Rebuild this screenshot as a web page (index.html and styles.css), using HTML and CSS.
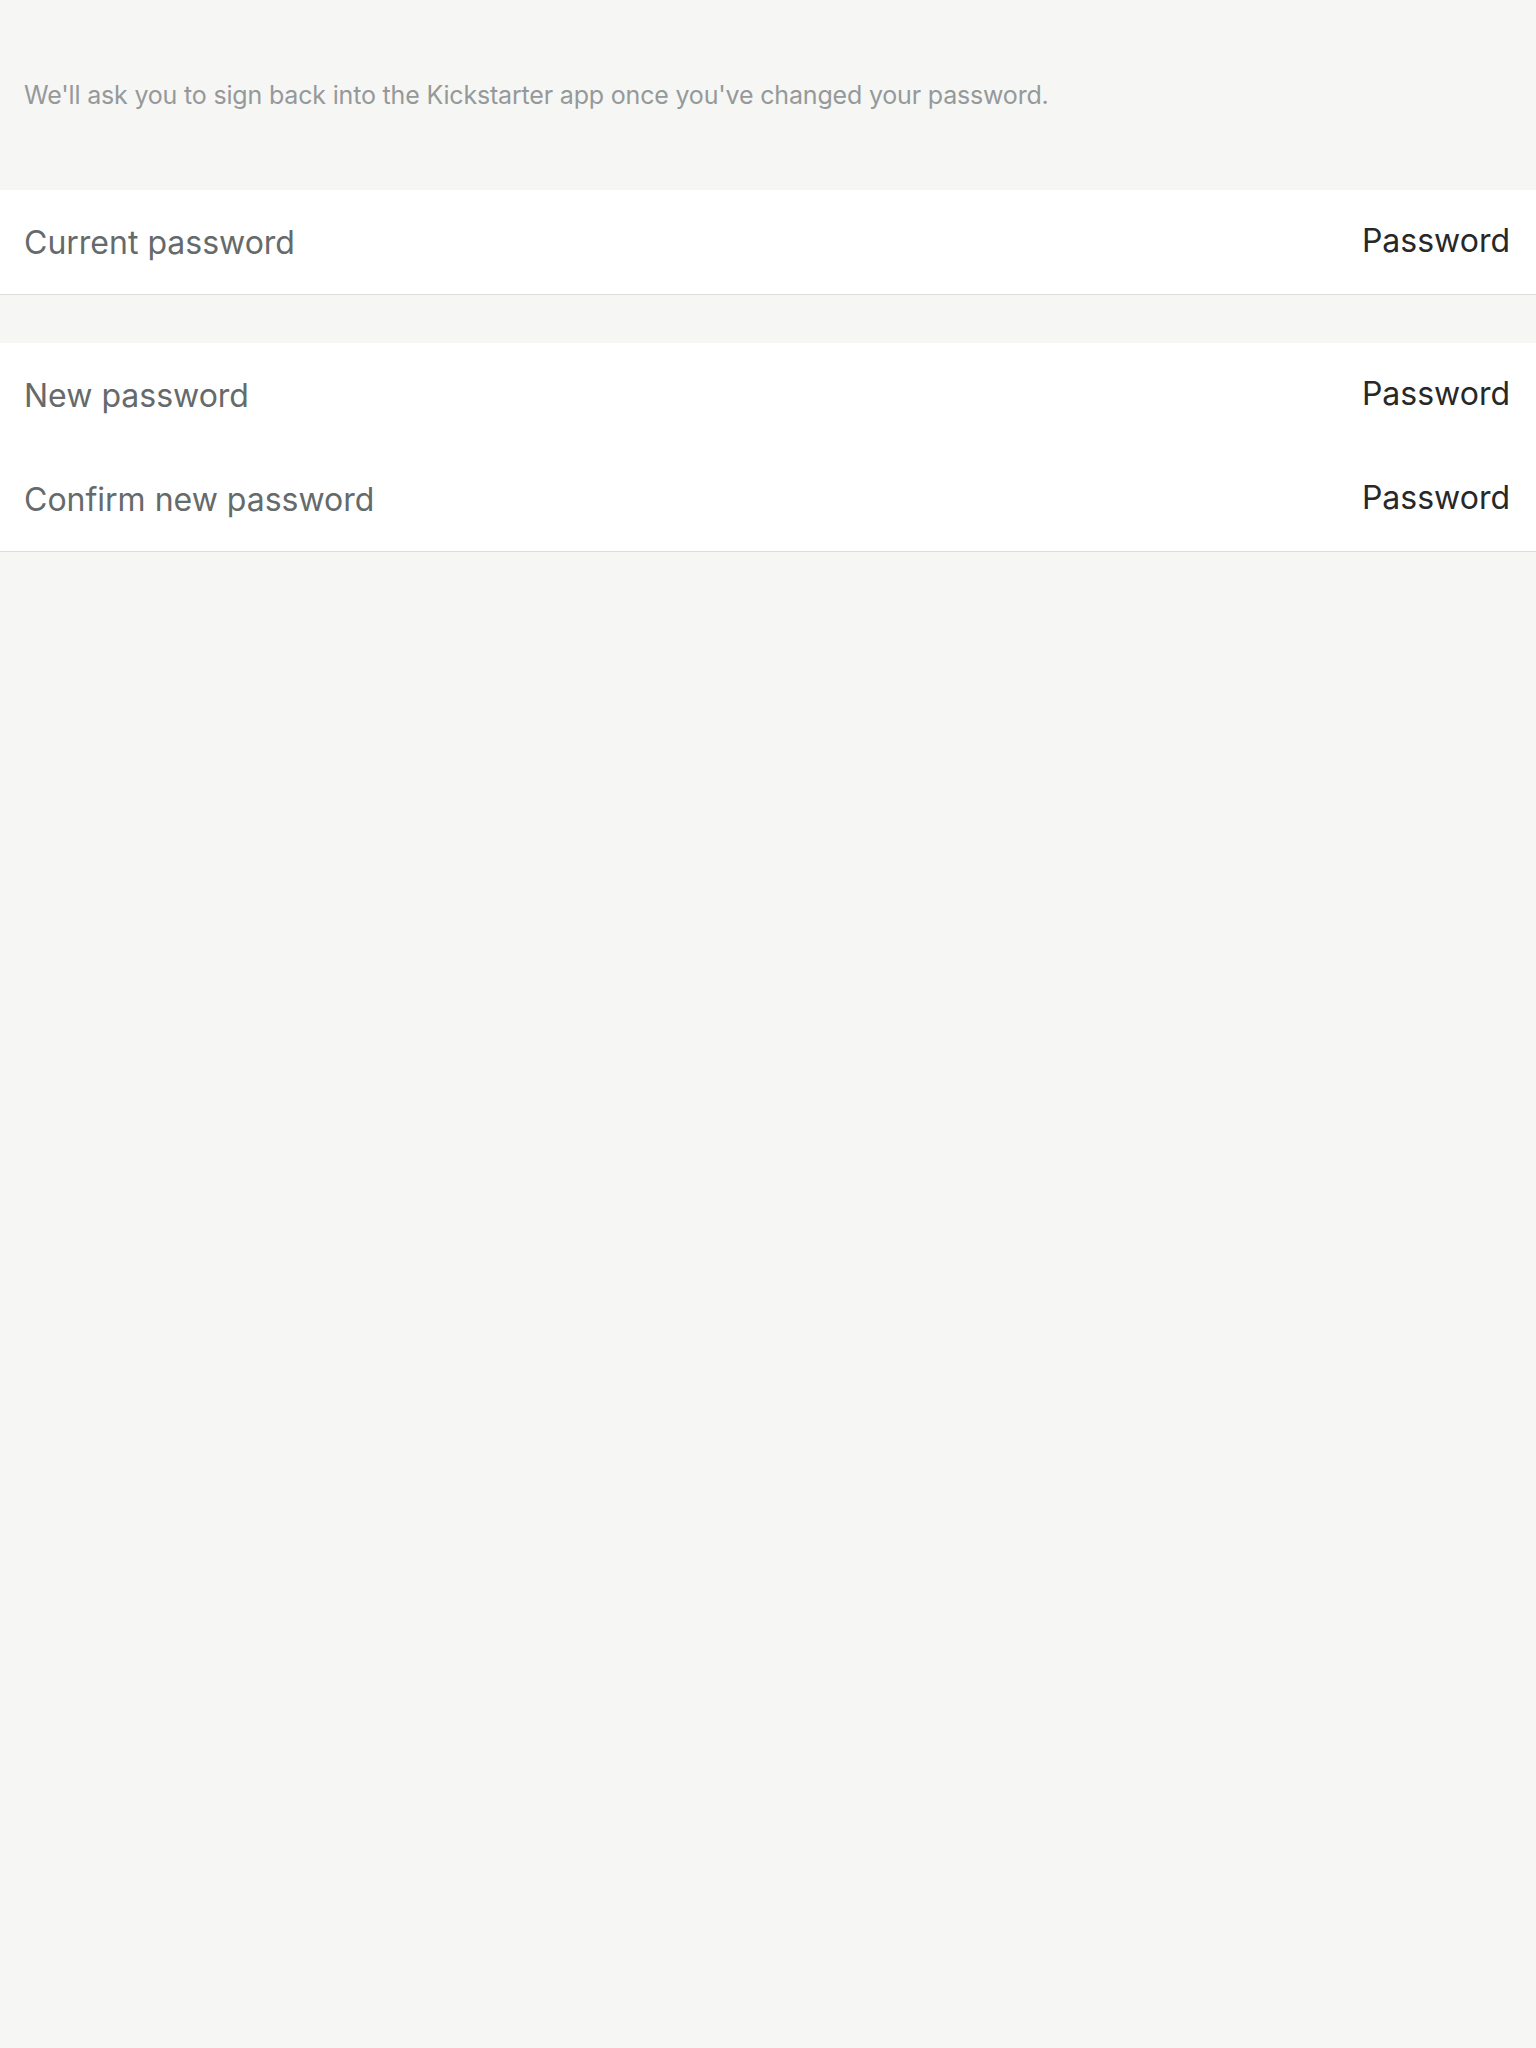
FILE: index.html
```html
<!DOCTYPE html>
<html lang="en">
<head>
<meta charset="utf-8">
<title>Change password</title>
<link rel="stylesheet" href="styles.css">
</head>
<body>
<div class="page">
  <div class="intro">
    <p class="intro-text">We'll ask you to sign back into the Kickstarter app once you've changed your password.</p>
  </div>
  <div class="group">
    <div class="row">
      <span class="label">Current password</span>
      <span class="value">Password</span>
    </div>
  </div>
  <div class="group group-second">
    <div class="row">
      <span class="label">New password</span>
      <span class="value">Password</span>
    </div>
    <div class="row">
      <span class="label">Confirm new password</span>
      <span class="value">Password</span>
    </div>
  </div>
</div>
</body>
</html>
```
FILE: styles.css
```css
html, body {
  margin: 0;
  padding: 0;
  background: #f6f6f4;
}
body {
  font-family: Inter, "Noto Sans", sans-serif;
  min-height: 2048px;
}
.page {
  display: flex;
  flex-direction: column;
}
.intro {
  height: 190px;
  display: flex;
  align-items: center;
  padding: 0 24px;
  box-sizing: border-box;
}
.intro-text {
  margin: 0;
  font-size: 25px;
  letter-spacing: -0.18px;
  line-height: 30px;
  color: #95999a;
}
.group {
  background: #ffffff;
  border-bottom: 1px solid #dcdcdc;
}
.group-second {
  margin-top: 48px;
}
.row {
  height: 104px;
  display: flex;
  align-items: center;
  justify-content: space-between;
  padding: 0 26px 0 24px;
}
.label {
  font-size: 32px;
  color: #656a6b;
}
.value {
  font-size: 32px;
  color: #282828;
  padding-bottom: 3px;
}
```
